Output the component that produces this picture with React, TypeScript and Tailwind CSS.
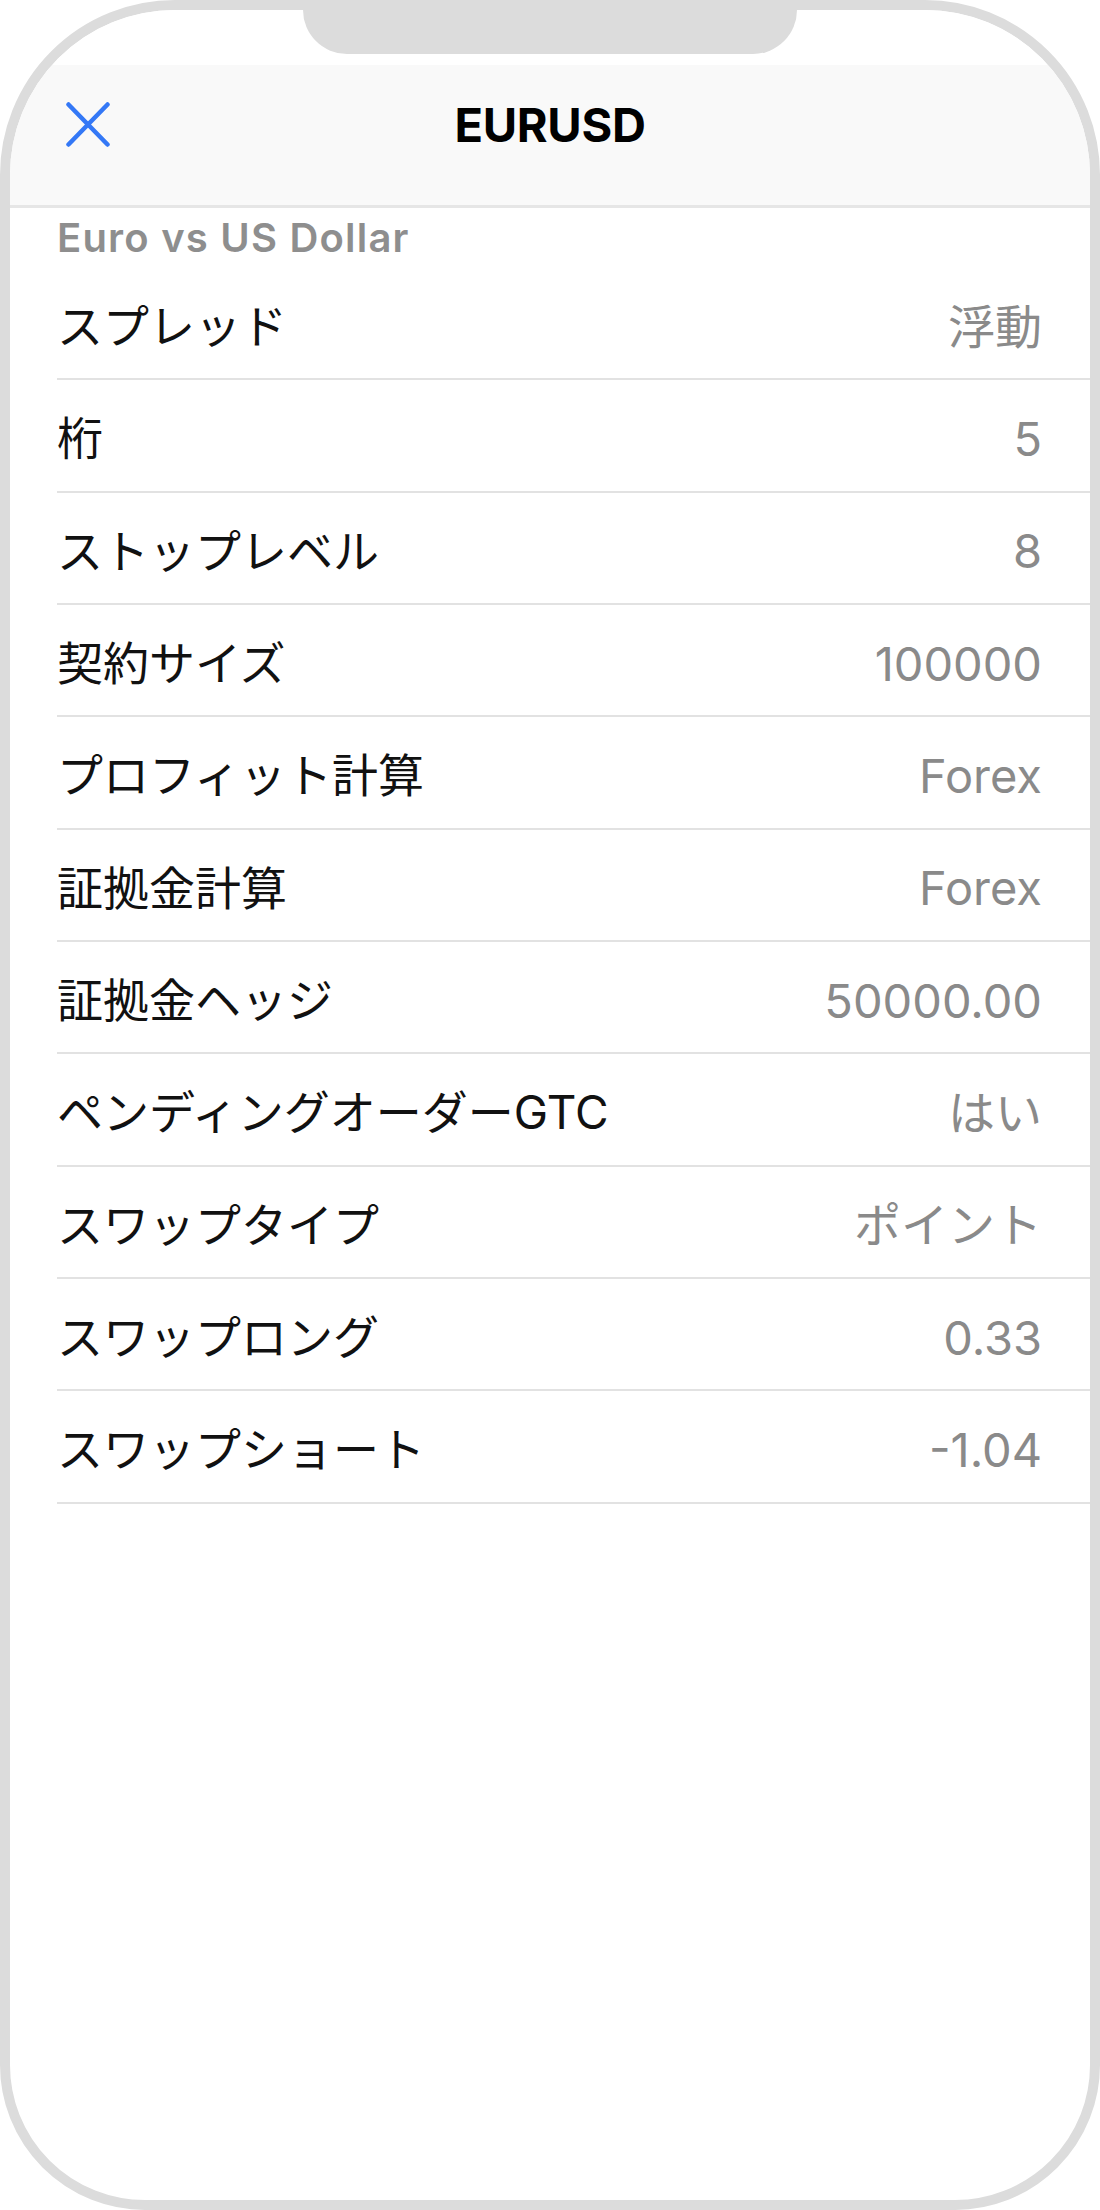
import React from "react";

const rows: [string, string][] = [
  ["スプレッド", "浮動"],
  ["桁", "5"],
  ["ストップレベル", "8"],
  ["契約サイズ", "100000"],
  ["プロフィット計算", "Forex"],
  ["証拠金計算", "Forex"],
  ["証拠金ヘッジ", "50000.00"],
  ["ペンディングオーダーGTC", "はい"],
  ["スワップタイプ", "ポイント"],
  ["スワップロング", "0.33"],
  ["スワップショート", "-1.04"],
];

export default function App() {
  return (
    <div className="w-[1100px] h-[2210px] bg-white">
      <div
        className="relative w-[1100px] h-[2210px] border-[10px] border-[#dcdcdc] rounded-t-[175px] rounded-b-[145px] overflow-hidden bg-white flex flex-col"
        style={{ fontFamily: '"Inter", "Noto Sans CJK JP", sans-serif' }}
      >
        {/* notch */}
        <div className="absolute left-[293px] top-0 w-[494px] h-[44px] bg-[#dcdcdc] rounded-b-[50px]" />
        {/* status area */}
        <div className="h-[55px] shrink-0 bg-white" />
        {/* header */}
        <div className="h-[143px] shrink-0 bg-[#f9f9f9] border-b-[3px] border-[#e6e6e6] grid grid-cols-[1fr_auto_1fr] items-center pb-[22px] px-[56px]">
          <div className="flex items-center">
            <svg width="44" height="45" viewBox="0 0 44 45">
              <line x1="2.5" y1="2.5" x2="41.5" y2="42.5" stroke="#3478f6" strokeWidth="4.5" strokeLinecap="round" />
              <line x1="41.5" y1="2.5" x2="2.5" y2="42.5" stroke="#3478f6" strokeWidth="4.5" strokeLinecap="round" />
            </svg>
          </div>
          <div className="text-[47px] font-bold text-black leading-none tracking-[-0.3px]">EURUSD</div>
          <div />
        </div>
        {/* content */}
        <div className="flex flex-col pl-[47px]">
          <div className="h-[60px] flex items-center text-[40px] font-semibold text-[#8e8e8e] leading-none tracking-[1.2px]">
            Euro vs US Dollar
          </div>
          {rows.map(([label, value]) => (
            <div
              key={label}
              className="h-[112.33px] border-b-2 border-[#e2e2e2] flex items-center justify-between pr-[48px] pt-[6px]"
            >
              <span className="text-[46px] text-[#111111] leading-none">{label}</span>
              <span className="text-[47px] text-[#8a8a8a] leading-none">{value}</span>
            </div>
          ))}
        </div>
      </div>
    </div>
  );
}
